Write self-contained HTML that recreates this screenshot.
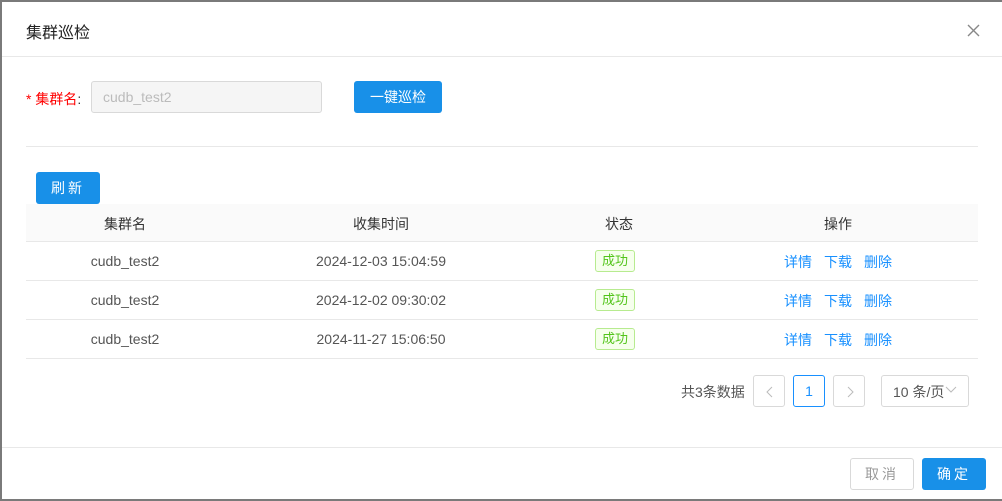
<!DOCTYPE html><html><head><meta charset="utf-8"><style>
*{box-sizing:border-box;margin:0;padding:0}
body{width:1002px;height:501px;background:#7a7a7a;font-family:"Liberation Sans","Noto Sans CJK SC",sans-serif;font-size:14px;color:#555;position:relative;overflow:hidden}
.m{position:absolute;left:2px;top:2px;width:1000px;height:497px;background:#fff}
.a{position:absolute}
.btn{position:absolute;background:#1890e8;color:#fff;border-radius:3px;text-align:center;font-size:14px}
.ln{position:absolute;height:1px;background:#e8e8e8}
.c{position:absolute;text-align:center;font-size:14px;color:#555}
.tag{position:absolute;width:40px;height:22px;border:1px solid #b7eb8f;background:#f6ffed;color:#52c41a;font-size:13px;text-align:center;line-height:20px;border-radius:3px}
.lk{position:absolute;color:#1890ff;font-size:14px}
.pb{position:absolute;width:32px;height:32px;border:1px solid #d9d9d9;border-radius:3px;text-align:center;line-height:30px;color:#bbb}
.pb svg{position:absolute;left:11px;top:10px}
</style></head><body>
<div class="m"></div>
<div class="a" style="left:26px;top:19px;font-size:16px;color:#222">集群巡检</div>
<svg class="a" style="left:967px;top:24px" width="13" height="13"><path d="M1 1L12 12M12 1L1 12" stroke="#888" stroke-width="1.4"/></svg>
<div class="ln" style="left:2px;top:56px;width:1000px"></div>
<div class="a" style="left:26px;top:89px;color:#f00;font-size:14px">* 集群名<span style="color:#333">:</span></div>
<div class="a" style="left:91px;top:81px;width:231px;height:32px;border:1px solid #d9d9d9;background:#f5f5f5;border-radius:3px;color:#bbb;padding:7px 11px;font-size:14px">cudb_test2</div>
<div class="btn" style="left:354px;top:81px;width:88px;height:32px;line-height:32px">一键巡检</div>
<div class="ln" style="left:26px;top:146px;width:952px"></div>
<div class="btn" style="left:36px;top:172px;width:64px;height:32px;line-height:32px;letter-spacing:3px">刷新</div>
<div class="a" style="left:26px;top:204px;width:952px;height:37px;background:#fafafa"></div>
<div class="c" style="left:75px;top:214px;width:100px;color:#333">集群名</div>
<div class="c" style="left:321px;top:214px;width:120px;color:#333">收集时间</div>
<div class="c" style="left:579px;top:214px;width:80px;color:#333">状态</div>
<div class="c" style="left:798px;top:214px;width:80px;color:#333">操作</div>
<div class="ln" style="left:26px;top:241px;width:952px"></div>
<div class="ln" style="left:26px;top:280px;width:952px"></div>
<div class="ln" style="left:26px;top:319px;width:952px"></div>
<div class="ln" style="left:26px;top:358px;width:952px"></div>
<div class="c" style="left:65px;top:253px;width:120px">cudb_test2</div>
<div class="c" style="left:301px;top:253px;width:160px">2024-12-03 15:04:59</div>
<div class="tag" style="left:595px;top:250px">成功</div>
<div class="lk" style="left:784px;top:252px">详情</div><div class="lk" style="left:824px;top:252px">下载</div><div class="lk" style="left:864px;top:252px">删除</div>
<div class="c" style="left:65px;top:292px;width:120px">cudb_test2</div>
<div class="c" style="left:301px;top:292px;width:160px">2024-12-02 09:30:02</div>
<div class="tag" style="left:595px;top:289px">成功</div>
<div class="lk" style="left:784px;top:291px">详情</div><div class="lk" style="left:824px;top:291px">下载</div><div class="lk" style="left:864px;top:291px">删除</div>
<div class="c" style="left:65px;top:331px;width:120px">cudb_test2</div>
<div class="c" style="left:301px;top:331px;width:160px">2024-11-27 15:06:50</div>
<div class="tag" style="left:595px;top:328px">成功</div>
<div class="lk" style="left:784px;top:330px">详情</div><div class="lk" style="left:824px;top:330px">下载</div><div class="lk" style="left:864px;top:330px">删除</div>
<div class="a" style="left:681px;top:382px;font-size:14px;color:#555">共3条数据</div>
<div class="pb" style="left:753px;top:375px"><svg width="10" height="12"><path d="M7 1L2 6L7 11" stroke="#bbb" fill="none"/></svg></div>
<div class="pb" style="left:793px;top:375px;border-color:#1890ff;color:#1890ff">1</div>
<div class="pb" style="left:833px;top:375px"><svg width="10" height="12"><path d="M3 1L8 6L3 11" stroke="#bbb" fill="none"/></svg></div>
<div class="a" style="left:881px;top:375px;width:88px;height:32px;border:1px solid #d9d9d9;border-radius:3px;padding:6px 0 0 11px;color:#555;white-space:nowrap">10 条/页</div>
<svg class="a" style="left:945px;top:386px" width="12" height="8"><path d="M1 1L6 6L11 1" stroke="#bbb" fill="none"/></svg>
<div class="ln" style="left:2px;top:447px;width:1000px"></div>
<div class="a" style="left:850px;top:458px;width:64px;height:32px;border:1px solid #d9d9d9;border-radius:3px;text-align:center;line-height:30px;color:#999;letter-spacing:3px">取消</div>
<div class="btn" style="left:922px;top:458px;width:64px;height:32px;line-height:32px;letter-spacing:3px">确定</div>
</body></html>
